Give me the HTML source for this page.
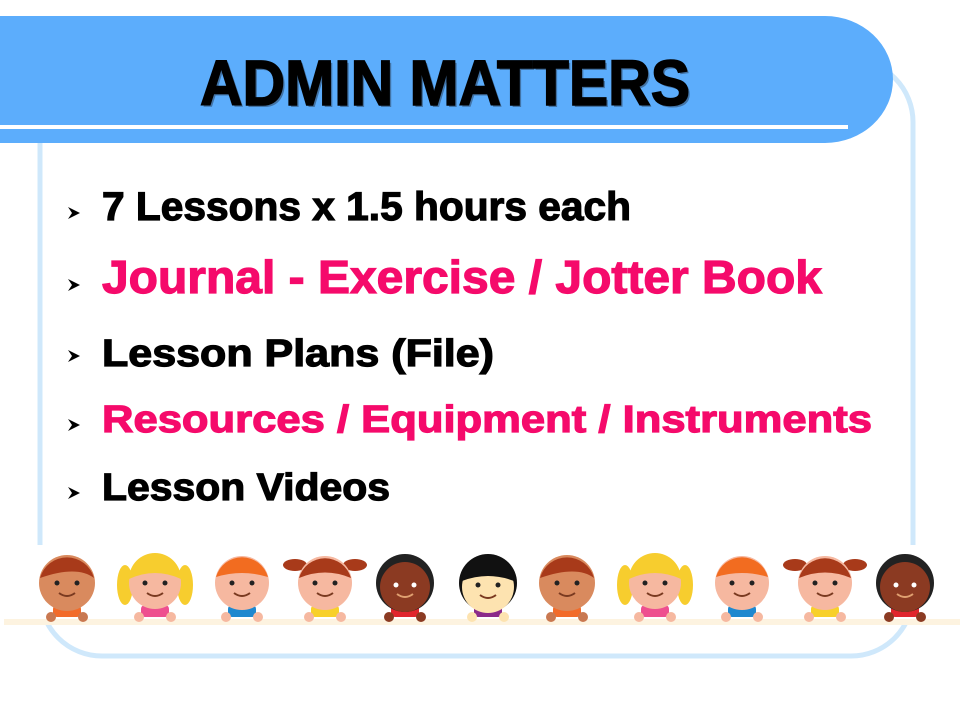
<!DOCTYPE html>
<html><head><meta charset="utf-8"><style>
html,body{margin:0;padding:0;background:#fff;}
body{width:960px;height:720px;overflow:hidden;position:relative;}
svg{position:absolute;left:0;top:0;}
</style></head><body>
<svg width="960" height="720" viewBox="0 0 960 720" xmlns="http://www.w3.org/2000/svg">
<rect x="40" y="60" width="873" height="596" rx="62" fill="none" stroke="#cfe8fb" stroke-width="5"/>
<path d="M0 16 H825 A68 63.5 0 0 1 825 143 H0 Z" fill="#5cadfc"/>
<rect x="0" y="125" width="848" height="4" fill="#fff"/>
<text x="202" y="107" font-family="Liberation Sans, sans-serif" font-weight="bold" font-size="64" fill="#2a3a50" textLength="490" lengthAdjust="spacingAndGlyphs" opacity="0.5">ADMIN MATTERS</text>
<text x="200" y="105" font-family="Liberation Sans, sans-serif" font-weight="bold" font-size="64" fill="#000" stroke="#000" stroke-width="1.5" textLength="490" lengthAdjust="spacingAndGlyphs">ADMIN MATTERS</text>
<g fill="#000">
<path d="M68 207 L80 213 L68 219 L72 213 Z"/>
<path d="M68 279 L80 285 L68 291 L72 285 Z"/>
<path d="M68 350 L80 356 L68 362 L72 356 Z"/>
<path d="M68 419 L80 425 L68 431 L72 425 Z"/>
<path d="M68 487 L80 493 L68 499 L72 493 Z"/>
</g>
<g font-family="Liberation Sans, sans-serif" font-weight="bold" stroke-width="1.2">
<text x="102" y="220" font-size="40" fill="#000" stroke="#000" textLength="529" lengthAdjust="spacingAndGlyphs">7 Lessons x 1.5 hours each</text>
<text x="102" y="293" font-size="46" fill="#f50a6b" stroke="#f50a6b" textLength="720" lengthAdjust="spacingAndGlyphs">Journal - Exercise / Jotter Book</text>
<text x="102" y="366" font-size="38" fill="#000" stroke="#000" textLength="392" lengthAdjust="spacingAndGlyphs">Lesson Plans (File)</text>
<text x="102" y="432" font-size="38" fill="#f50a6b" stroke="#f50a6b" textLength="770" lengthAdjust="spacingAndGlyphs">Resources / Equipment / Instruments</text>
<text x="102" y="500" font-size="38" fill="#000" stroke="#000" textLength="288" lengthAdjust="spacingAndGlyphs">Lesson Videos</text>
</g>
<rect x="0" y="545" width="960" height="74" fill="#fff"/>
<rect x="4" y="619" width="956" height="6" fill="#fdf3e0"/>
<g>
<g transform="translate(67,583)"><rect x="-14" y="22" width="28" height="12" rx="4" fill="#f26b2a"/><circle cx="-16" cy="34" r="5" fill="#c97850"/><circle cx="16" cy="34" r="5" fill="#c97850"/><circle r="28" fill="#d98a5e"/><path d="M-27 -5 A28 28 0 0 1 27 -5 Q10 -18 -27 -5Z" fill="#a83a1a"/><circle cx="-10" cy="0" r="2.5" fill="#222"/><circle cx="10" cy="0" r="2.5" fill="#222"/><path d="M-8 10 Q0 16 8 10" stroke="#7a3a20" stroke-width="2" fill="none"/></g>
<g transform="translate(155,583)"><rect x="-14" y="22" width="28" height="12" rx="4" fill="#ee4f8f"/><circle cx="-16" cy="34" r="5" fill="#f6b8a0"/><circle cx="16" cy="34" r="5" fill="#f6b8a0"/><ellipse cx="-30" cy="2" rx="8" ry="20" fill="#f7cd2e"/><ellipse cx="30" cy="2" rx="8" ry="20" fill="#f7cd2e"/><circle r="26" fill="#f6b8a0"/><path d="M-26 -4 A26 26 0 0 1 26 -4 Q0 -16 -26 -4Z" fill="#f7cd2e"/><circle cx="-10" cy="0" r="2.5" fill="#222"/><circle cx="10" cy="0" r="2.5" fill="#222"/><path d="M-8 10 Q0 16 8 10" stroke="#7a3a20" stroke-width="2" fill="none"/></g>
<g transform="translate(242,583)"><rect x="-14" y="22" width="28" height="12" rx="4" fill="#1e88cf"/><circle cx="-16" cy="34" r="5" fill="#f6b8a0"/><circle cx="16" cy="34" r="5" fill="#f6b8a0"/><circle r="27" fill="#f6b8a0"/><path d="M-26 -6 A27 27 0 0 1 26 -6 Q0 -14 -26 -6Z" fill="#f26c20"/><circle cx="-10" cy="0" r="2.5" fill="#222"/><circle cx="10" cy="0" r="2.5" fill="#222"/><path d="M-8 10 Q0 16 8 10" stroke="#7a3a20" stroke-width="2" fill="none"/></g>
<g transform="translate(325,583)"><rect x="-14" y="22" width="28" height="12" rx="4" fill="#f8d02a"/><circle cx="-16" cy="34" r="5" fill="#f6b8a0"/><circle cx="16" cy="34" r="5" fill="#f6b8a0"/><ellipse cx="-30" cy="-18" rx="12" ry="6" fill="#a83a1a"/><ellipse cx="30" cy="-18" rx="12" ry="6" fill="#a83a1a"/><circle r="27" fill="#f6b8a0"/><path d="M-26 -5 A27 27 0 0 1 26 -5 Q0 -16 -26 -5Z" fill="#a83a1a"/><circle cx="-10" cy="0" r="2.5" fill="#222"/><circle cx="10" cy="0" r="2.5" fill="#222"/><path d="M-8 10 Q0 16 8 10" stroke="#7a3a20" stroke-width="2" fill="none"/></g>
<g transform="translate(405,583)"><rect x="-14" y="22" width="28" height="12" rx="4" fill="#e0262e"/><circle cx="-16" cy="34" r="5" fill="#8b3a22"/><circle cx="16" cy="34" r="5" fill="#8b3a22"/><circle r="29" fill="#222"/><circle cy="4" r="25" fill="#8b3a22"/><circle cx="-9" cy="2" r="2.5" fill="#fff"/><circle cx="9" cy="2" r="2.5" fill="#fff"/><path d="M-8 11 Q0 17 8 11" stroke="#e0a070" stroke-width="2" fill="none"/></g>
<g transform="translate(488,583)"><rect x="-14" y="22" width="28" height="12" rx="4" fill="#8b2a8a"/><circle cx="-16" cy="34" r="5" fill="#fde3b0"/><circle cx="16" cy="34" r="5" fill="#fde3b0"/><circle r="29" fill="#111"/><circle cy="4" r="26" fill="#fde3b0"/><path d="M-26 -2 A26 26 0 0 1 26 -2 Q0 -12 -26 -2Z" fill="#111"/><circle cx="-10" cy="2" r="2.5" fill="#222"/><circle cx="10" cy="2" r="2.5" fill="#222"/><path d="M-8 12 Q0 18 8 12" stroke="#7a3a20" stroke-width="2" fill="none"/></g>
<g transform="translate(567,583)"><rect x="-14" y="22" width="28" height="12" rx="4" fill="#f26b2a"/><circle cx="-16" cy="34" r="5" fill="#c97850"/><circle cx="16" cy="34" r="5" fill="#c97850"/><circle r="28" fill="#d98a5e"/><path d="M-27 -5 A28 28 0 0 1 27 -5 Q10 -18 -27 -5Z" fill="#a83a1a"/><circle cx="-10" cy="0" r="2.5" fill="#222"/><circle cx="10" cy="0" r="2.5" fill="#222"/><path d="M-8 10 Q0 16 8 10" stroke="#7a3a20" stroke-width="2" fill="none"/></g>
<g transform="translate(655,583)"><rect x="-14" y="22" width="28" height="12" rx="4" fill="#ee4f8f"/><circle cx="-16" cy="34" r="5" fill="#f6b8a0"/><circle cx="16" cy="34" r="5" fill="#f6b8a0"/><ellipse cx="-30" cy="2" rx="8" ry="20" fill="#f7cd2e"/><ellipse cx="30" cy="2" rx="8" ry="20" fill="#f7cd2e"/><circle r="26" fill="#f6b8a0"/><path d="M-26 -4 A26 26 0 0 1 26 -4 Q0 -16 -26 -4Z" fill="#f7cd2e"/><circle cx="-10" cy="0" r="2.5" fill="#222"/><circle cx="10" cy="0" r="2.5" fill="#222"/><path d="M-8 10 Q0 16 8 10" stroke="#7a3a20" stroke-width="2" fill="none"/></g>
<g transform="translate(742,583)"><rect x="-14" y="22" width="28" height="12" rx="4" fill="#1e88cf"/><circle cx="-16" cy="34" r="5" fill="#f6b8a0"/><circle cx="16" cy="34" r="5" fill="#f6b8a0"/><circle r="27" fill="#f6b8a0"/><path d="M-26 -6 A27 27 0 0 1 26 -6 Q0 -14 -26 -6Z" fill="#f26c20"/><circle cx="-10" cy="0" r="2.5" fill="#222"/><circle cx="10" cy="0" r="2.5" fill="#222"/><path d="M-8 10 Q0 16 8 10" stroke="#7a3a20" stroke-width="2" fill="none"/></g>
<g transform="translate(825,583)"><rect x="-14" y="22" width="28" height="12" rx="4" fill="#f8d02a"/><circle cx="-16" cy="34" r="5" fill="#f6b8a0"/><circle cx="16" cy="34" r="5" fill="#f6b8a0"/><ellipse cx="-30" cy="-18" rx="12" ry="6" fill="#a83a1a"/><ellipse cx="30" cy="-18" rx="12" ry="6" fill="#a83a1a"/><circle r="27" fill="#f6b8a0"/><path d="M-26 -5 A27 27 0 0 1 26 -5 Q0 -16 -26 -5Z" fill="#a83a1a"/><circle cx="-10" cy="0" r="2.5" fill="#222"/><circle cx="10" cy="0" r="2.5" fill="#222"/><path d="M-8 10 Q0 16 8 10" stroke="#7a3a20" stroke-width="2" fill="none"/></g>
<g transform="translate(905,583)"><rect x="-14" y="22" width="28" height="12" rx="4" fill="#e0262e"/><circle cx="-16" cy="34" r="5" fill="#8b3a22"/><circle cx="16" cy="34" r="5" fill="#8b3a22"/><circle r="29" fill="#222"/><circle cy="4" r="25" fill="#8b3a22"/><circle cx="-9" cy="2" r="2.5" fill="#fff"/><circle cx="9" cy="2" r="2.5" fill="#fff"/><path d="M-8 11 Q0 17 8 11" stroke="#e0a070" stroke-width="2" fill="none"/></g>
</g>
</svg>
</body></html>
